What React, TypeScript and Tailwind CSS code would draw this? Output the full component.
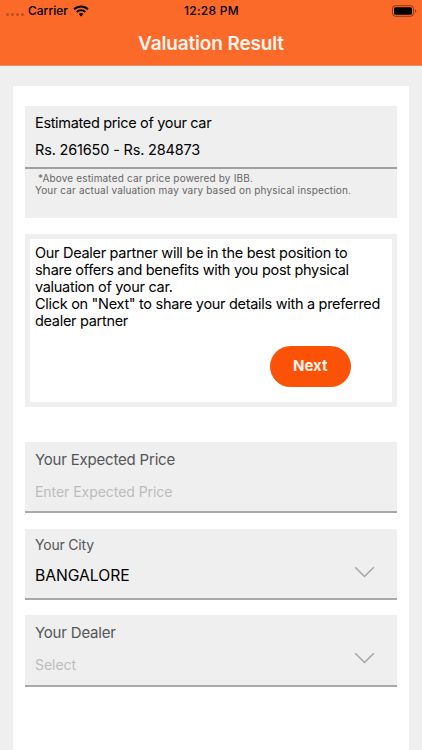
import React from 'react';

interface FieldProps {
  label: string;
  value: string;
  hasMenu?: boolean;
  className?: string;
  labelClass?: string;
  valueClass?: string;
}

const StatusBar: React.FC = () => (
  <div className="grid grid-cols-3 items-center h-[21px] pl-[6px] pr-[5px] text-black">
    <div className="flex items-center">
      <div className="flex gap-[2px] mt-[7px] mr-[4px]">
        {[0, 1, 2, 3].map((dot) => (
          <span key={dot} className="w-[3px] h-[3px] rounded-full bg-black/25" />
        ))}
      </div>
      <span className="text-[12px] font-medium">Carrier</span>
      <svg width="16" height="12" viewBox="0 0 16 12" className="ml-[5px]" fill="none">
        <path d="M1.1 4.3a9.8 9.8 0 0 1 13.8 0" stroke="currentColor" strokeWidth="2.1" />
        <path d="M3.7 7a6.1 6.1 0 0 1 8.6 0" stroke="currentColor" strokeWidth="2" />
        <path d="M8 11.6 5.6 9.1a3.5 3.5 0 0 1 4.8 0Z" fill="currentColor" />
      </svg>
    </div>
    <span className="text-center text-[12px] font-medium tracking-[0.25px]">12:28 PM</span>
    <svg width="25" height="12" viewBox="0 0 25 12" className="justify-self-end" fill="none">
      <rect x="0.5" y="0.7" width="21" height="10.6" rx="3" stroke="#000" strokeOpacity="0.45" />
      <rect x="2" y="2.2" width="18" height="7.6" rx="1.6" fill="#000" />
      <path d="M23 4.2v3.6c.8-.3 1.3-1 1.3-1.8s-.5-1.5-1.3-1.8Z" fill="#000" fillOpacity="0.45" />
    </svg>
  </div>
);

const Field: React.FC<FieldProps> = ({ label, value, hasMenu, className, labelClass, valueClass }) => (
  <div className={`flex justify-between border-b-2 border-[#a9a9a9] bg-[#efefef] pl-[10px] pr-[22px] ${className}`}>
    <div className="flex flex-col">
      <span className={`text-[#555] whitespace-nowrap tracking-[-0.2px] ${labelClass}`}>{label}</span>
      <span className={`whitespace-nowrap tracking-[-0.05px] ${valueClass}`}>{value}</span>
    </div>
    {hasMenu && (
      <svg width="21" height="12" viewBox="0 0 21 12" className="mt-[37px]" fill="none">
        <path d="m1.2 1.2 9.3 9.3 9.3-9.3" stroke="#a6a6a6" strokeWidth="1.5" />
      </svg>
    )}
  </div>
);

export default function App() {
  return (
    <div className="w-full h-[750px] flex flex-col overflow-hidden bg-[#efefef] font-['Inter',sans-serif]">
      <header className="h-[66px] shrink-0 bg-[#fc6a2a] border-b border-[#f28e65]">
        <StatusBar />
        <h1 className="h-[44px] text-center text-[19px] leading-[45px] font-semibold tracking-[-0.15px] text-[#fff4ee]">
          Valuation Result
        </h1>
      </header>

      <main className="flex-1 mt-[20px] ml-[13px] mr-[13px] px-[12px] pt-[20px] bg-white">
        <section className="h-[112px] bg-[#efefef]">
          <div className="h-[63px] pl-[10px] pt-[8px] border-b-2 border-[#a0a0a0] text-[14.5px] leading-[17px] text-black">
            <p className="whitespace-nowrap tracking-[-0.33px]">Estimated price of your car</p>
            <p className="mt-[10px] whitespace-nowrap tracking-[-0.17px]">Rs. 261650 - Rs. 284873</p>
          </div>
          <div className="pl-[10px] pt-[3px] text-[10px] leading-[12px] text-[#666]">
            <p className="pl-[3px] whitespace-nowrap tracking-[0.16px]">*Above estimated car price powered by IBB.</p>
            <p className="whitespace-nowrap tracking-[0.16px]">
              Your car actual valuation may vary based on physical inspection.
            </p>
          </div>
        </section>

        <section className="flex flex-col h-[173px] mt-[16px] border-[5px] border-[#efefef] pl-[5px] pt-[5px]">
          <div className="text-[14.5px] leading-[17px] tracking-[-0.3px] text-black whitespace-nowrap">
            <p>Our Dealer partner will be in the best position to</p>
            <p>share offers and benefits with you post physical</p>
            <p>valuation of your car.</p>
            <p>Click on "Next" to share your details with a preferred</p>
            <p>dealer partner</p>
          </div>
          <button className="self-end mr-[41px] mt-[16.5px] w-[81.5px] h-[41px] rounded-full bg-[#fc5208] text-[15px] font-bold text-[#fff4ee]">
            Next
          </button>
        </section>

        <Field
          label="Your Expected Price"
          value="Enter Expected Price"
          className="mt-[35px] h-[71px]"
          labelClass="mt-[9px] text-[15px] leading-[18px]"
          valueClass="mt-[14px] text-[14px] leading-[18px] text-[#bcbcbc]"
        />
        <Field
          label="Your City"
          value="BANGALORE"
          hasMenu
          className="mt-[16px] h-[71px]"
          labelClass="mt-[7px] text-[14px] leading-[18px]"
          valueClass="mt-[13px] text-[15.7px] leading-[18px] text-black"
        />
        <Field
          label="Your Dealer"
          value="Select"
          hasMenu
          className="mt-[15px] h-[72px]"
          labelClass="mt-[9px] text-[15px] leading-[18px]"
          valueClass="mt-[14px] text-[14px] leading-[18px] text-[#bcbcbc]"
        />
      </main>
    </div>
  );
}
